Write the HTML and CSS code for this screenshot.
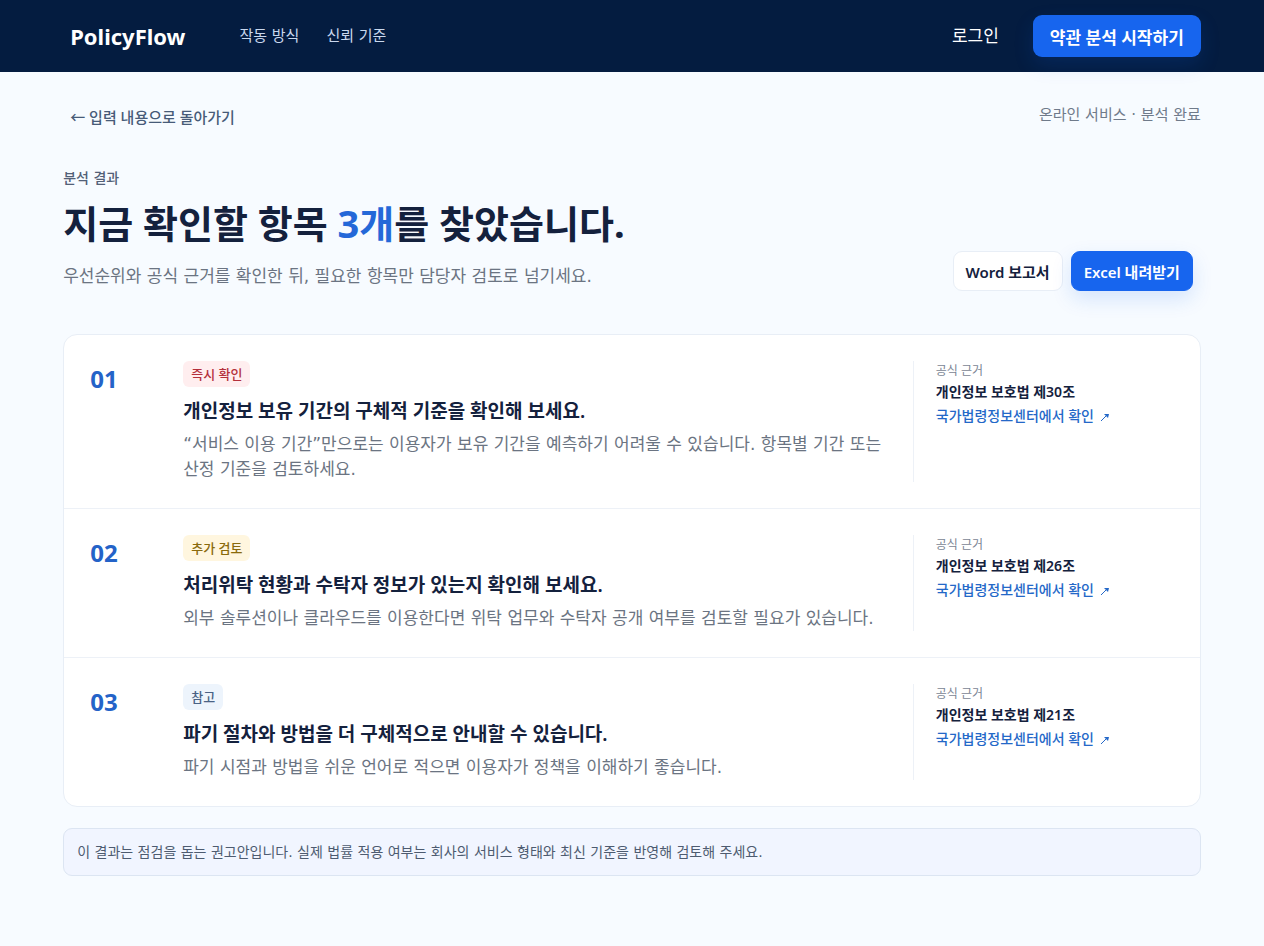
FILE: index.html
```
<!DOCTYPE html>
<html lang="ko">
<head>
    <meta charset="UTF-8">
    <meta name="viewport" content="width=device-width, initial-scale=1.0">
    <title>PolicyFlow - 분석 결과</title>
    <link rel="stylesheet" href="styles.css">
</head>
<body>
    <header class="site-header">
        <div class="container header-inner">
            <a class="logo" href="#">PolicyFlow</a>
            <nav class="main-nav">
                <a href="#">작동 방식</a>
                <a href="#">신뢰 기준</a>
            </nav>
            <a class="login" href="#">로그인</a>
            <button type="button" class="btn-start">약관 분석 시작하기</button>
        </div>
    </header>

    <main class="container">
        <div class="top-line">
            <button type="button" class="btn-back">← 입력 내용으로 돌아가기</button>
            <p class="status">온라인 서비스 · 분석 완료</p>
        </div>

        <section class="result-head">
            <div>
                <p class="eyebrow">분석 결과</p>
                <h1>지금 확인할 항목 <span>3개</span>를 찾았습니다.</h1>
                <p class="lead">우선순위와 공식 근거를 확인한 뒤, 필요한 항목만 담당자 검토로 넘기세요.</p>
            </div>
            <div class="downloads">
                <button type="button" class="btn-word">Word 보고서</button>
                <button type="button" class="btn-excel">Excel 내려받기</button>
            </div>
        </section>

        <section class="result-list">
            <article class="result">
                <strong class="number">01</strong>
                <div class="result-body">
                    <span class="badge badge-red">즉시 확인</span>
                    <h2>개인정보 보유 기간의 구체적 기준을 확인해 보세요.</h2>
                    <p>“서비스 이용 기간”만으로는 이용자가 보유 기간을 예측하기 어려울 수 있습니다. 항목별 기간 또는 산정 기준을 검토하세요.</p>
                </div>
                <aside class="source">
                    <small>공식 근거</small>
                    <strong>개인정보 보호법 제30조</strong>
                    <a href="#">국가법령정보센터에서 확인 <svg class="arrow" viewBox="0 0 10 10"><path class="line" d="M1 9L7 3"/><path class="head" d="M4 2H9L8 6Z"/></svg></a>
                </aside>
            </article>
            <article class="result">
                <strong class="number">02</strong>
                <div class="result-body">
                    <span class="badge badge-yellow">추가 검토</span>
                    <h2>처리위탁 현황과 수탁자 정보가 있는지 확인해 보세요.</h2>
                    <p>외부 솔루션이나 클라우드를 이용한다면 위탁 업무와 수탁자 공개 여부를 검토할 필요가 있습니다.</p>
                </div>
                <aside class="source">
                    <small>공식 근거</small>
                    <strong>개인정보 보호법 제26조</strong>
                    <a href="#">국가법령정보센터에서 확인 <svg class="arrow" viewBox="0 0 10 10"><path class="line" d="M1 9L7 3"/><path class="head" d="M4 2H9L8 6Z"/></svg></a>
                </aside>
            </article>
            <article class="result">
                <strong class="number">03</strong>
                <div class="result-body">
                    <span class="badge badge-blue">참고</span>
                    <h2>파기 절차와 방법을 더 구체적으로 안내할 수 있습니다.</h2>
                    <p>파기 시점과 방법을 쉬운 언어로 적으면 이용자가 정책을 이해하기 좋습니다.</p>
                </div>
                <aside class="source">
                    <small>공식 근거</small>
                    <strong>개인정보 보호법 제21조</strong>
                    <a href="#">국가법령정보센터에서 확인 <svg class="arrow" viewBox="0 0 10 10"><path class="line" d="M1 9L7 3"/><path class="head" d="M4 2H9L8 6Z"/></svg></a>
                </aside>
            </article>
        </section>

        <p class="notice">이 결과는 점검을 돕는 권고안입니다. 실제 법률 적용 여부는 회사의 서비스 형태와 최신 기준을 반영해 검토해 주세요.</p>
    </main>
</body>
</html>
```
FILE: styles.css
```
* {
    box-sizing: border-box;
}

body {
    margin: 0;
    min-height: 100vh;
    background: #f7fbff;
    color: #14213d;
    font-family: "Noto Sans", "Noto Sans CJK KR", sans-serif;
    font-size: 15px;
    line-height: 24px;
    word-break: keep-all;
}

h1, h2, p {
    margin: 0;
}

a {
    text-decoration: none;
}

button {
    font-family: inherit;
    cursor: pointer;
}

.container {
    width: 90%;
    margin: 0 auto;
}

/* small and running text */
.main-nav,
.status,
.eyebrow,
.lead,
.result-body p,
.notice {
    font-family: "DejaVu Sans", "Noto Sans CJK KR", sans-serif;
}

/* header */
.site-header {
    background: #041c40;
}

.header-inner {
    display: flex;
    align-items: center;
    height: 72px;
    padding-left: 7px;
}

.logo {
    color: #fff;
    font-size: 22px;
    font-weight: 700;
    line-height: 32px;
}

.main-nav {
    display: flex;
    gap: 27px;
    margin-left: 54px;
}

.main-nav a {
    color: #c9d8ee;
}

.login {
    margin-left: auto;
    color: #fff;
    font-size: 17px;
}

.btn-start {
    height: 42px;
    margin-left: 34px;
    padding: 0 17px;
    border: 0;
    border-radius: 9px;
    background: #1765ee;
    box-shadow: 0 8px 20px rgba(23, 101, 238, 0.15);
    color: #fff;
    font-size: 17px;
    font-weight: 700;
}

/* page title */
.top-line {
    display: flex;
    justify-content: space-between;
    padding-top: 31px;
}

.btn-back {
    padding: 2px 7px;
    border: 0;
    background: none;
    color: #475b78;
    font-size: 15px;
    font-weight: 500;
    line-height: 24px;
}

.status {
    color: #6f7a8a;
}

.result-head {
    display: flex;
    justify-content: space-between;
    align-items: flex-end;
    padding: 35px 8px 43px 0;
}

.eyebrow {
    color: #526077;
    font-size: 14px;
    font-weight: 500;
}

h1 {
    margin-top: 8px;
    font-size: 38px;
    line-height: 50px;
}

h1 span {
    color: #2468d8;
}

.lead {
    margin-top: 14px;
    color: #6b7482;
    font-size: 17px;
    line-height: 29px;
}

.downloads {
    display: flex;
    gap: 8px;
}

.downloads button {
    height: 40px;
    padding: 0 12px;
    border: 1px solid #e8eef6;
    border-radius: 9px;
    background: #fff;
    color: #14213d;
    font-size: 15px;
    font-weight: 600;
}

.downloads .btn-excel {
    border-color: #1765ee;
    background: #1765ee;
    box-shadow: 0 8px 20px rgba(23, 101, 238, 0.15);
    color: #fff;
}

/* results */
.result-list {
    border: 1px solid #e8eef6;
    border-radius: 14px;
    background: #fff;
}

.result {
    display: grid;
    grid-template-columns: 69px 1fr 261px;
    gap: 24px;
    padding: 26px;
}

.result + .result {
    border-top: 1px solid #edf1f7;
}

.number {
    padding-top: 2px;
    color: #2463c8;
    font-size: 24px;
    line-height: 32px;
}

.badge {
    display: inline-block;
    padding: 0 8px;
    border-radius: 6px;
    font-size: 13px;
    font-weight: 500;
    line-height: 26px;
    vertical-align: top;
}

.badge-red {
    background: #ffeeef;
    color: #b4303c;
}

.badge-yellow {
    background: #fff6df;
    color: #8a6a0c;
}

.badge-blue {
    background: #edf4fc;
    color: #4a6285;
}

.result h2 {
    margin: 10px 0 7px;
    font-size: 19px;
    font-weight: 600;
    line-height: 28px;
}

.result-body p {
    color: #6b7482;
    font-size: 17px;
    line-height: 25px;
}

.source {
    display: flex;
    flex-direction: column;
    padding-left: 22px;
    border-left: 1px solid #edf1f7;
    font-size: 14px;
}

.source small {
    color: #7b8594;
    font-size: 12px;
    line-height: 19px;
}

.source strong {
    font-weight: 600;
}

.source a {
    color: #2468c8;
    font-weight: 500;
}

.arrow {
    width: 10px;
    height: 10px;
    margin-left: 2px;
    vertical-align: -1px;
}

.arrow .line {
    fill: none;
    stroke: currentColor;
}

.arrow .head {
    fill: currentColor;
}

.notice {
    margin: 21px 0 60px;
    padding: 11px 13px;
    border: 1px solid #dce5f2;
    border-radius: 9px;
    background: #f1f5ff;
    color: #4d5b70;
    font-size: 14px;
}
```
